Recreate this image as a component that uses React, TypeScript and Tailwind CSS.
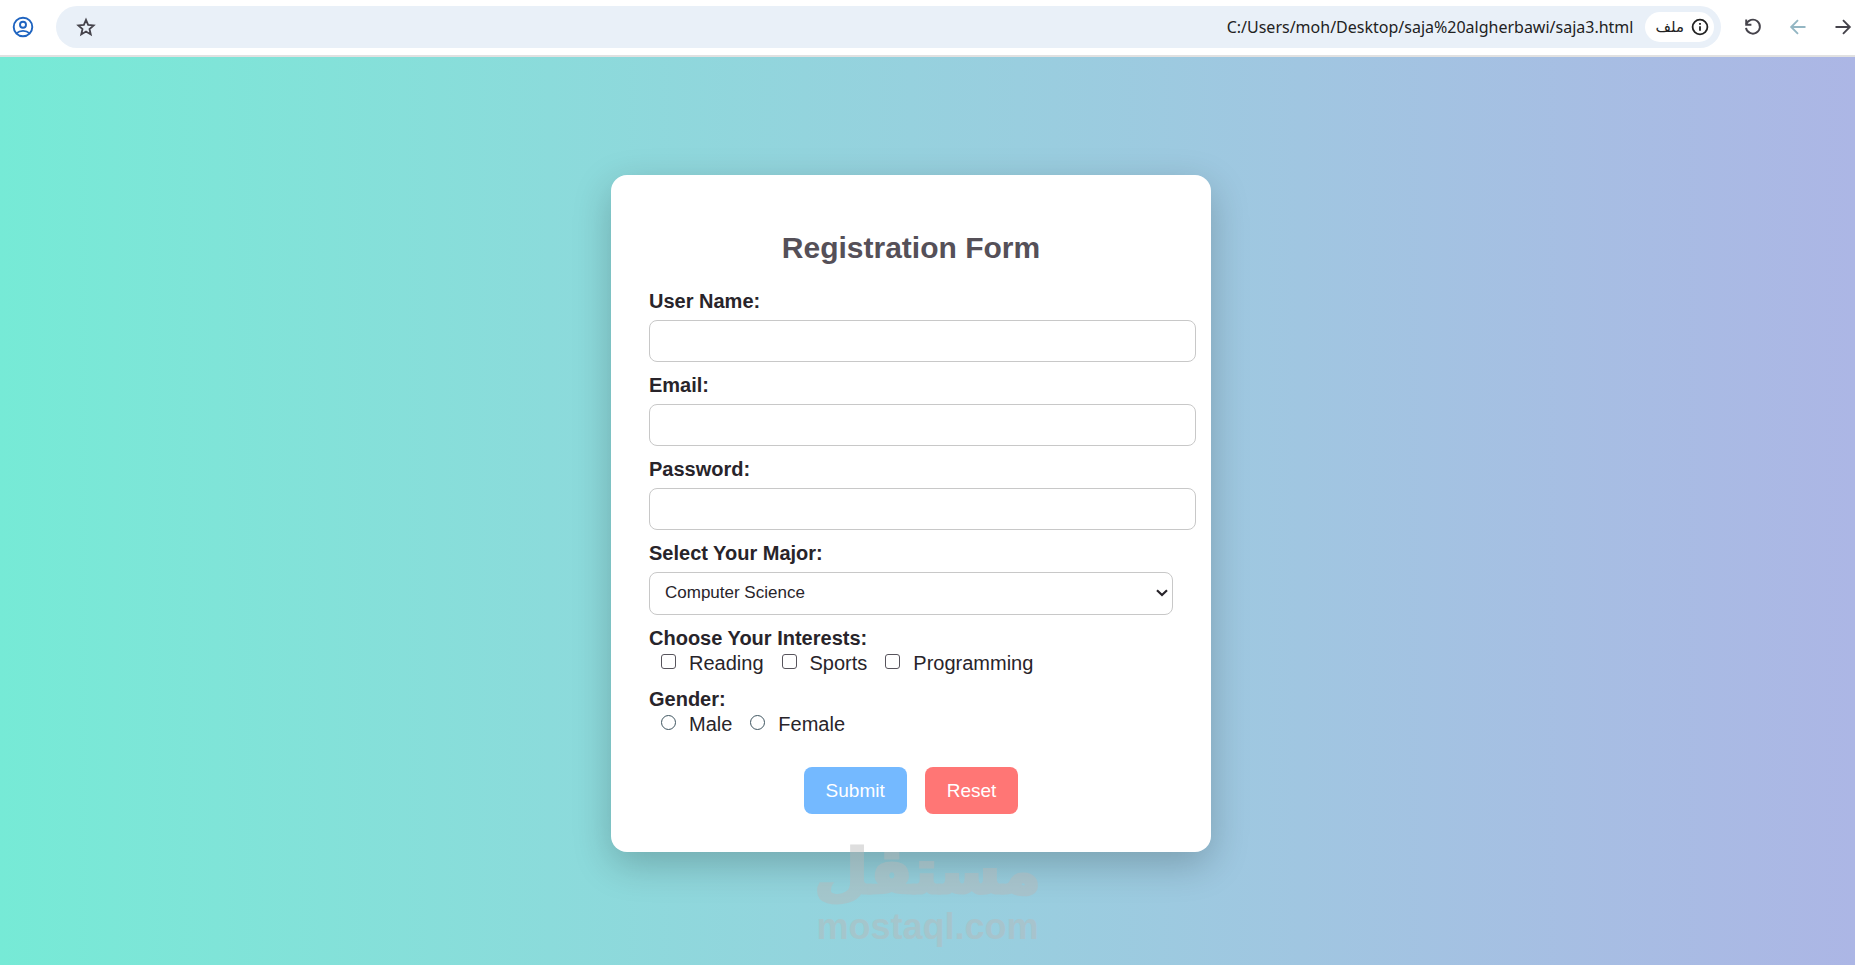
import type { ReactNode } from "react";

const INTERESTS = ["Reading", "Sports", "Programming"];
const GENDERS = ["Male", "Female"];
const MAJORS = ["Computer Science", "Information Technology", "Software Engineering"];

const FIELDS = [
  { id: "username", label: "User Name:", type: "text" },
  { id: "email", label: "Email:", type: "email" },
  { id: "password", label: "Password:", type: "password" },
];

function IconButton({ label, children }: { label: string; children: ReactNode }) {
  return (
    <button type="button" aria-label={label} className="flex size-6 shrink-0 items-center justify-center">
      {children}
    </button>
  );
}

function BrowserBar() {
  return (
    <header className="flex h-[57px] items-center border-b-2 border-[#e1e1e1] bg-white pb-px pl-[11px] text-[#45434b]">
      <IconButton label="Profile">
        <svg viewBox="0 0 24 24" className="size-6" fill="none" stroke="#1f64c0" strokeWidth="1.9">
          <circle cx="12" cy="12" r="9.3" />
          <circle cx="12" cy="9.8" r="3" />
          <path d="M5.4 18.4c1.7-1.6 4-2.5 6.6-2.5s4.9.9 6.6 2.5" />
        </svg>
      </IconButton>
      <div className="mr-5 ml-[21px] flex h-[42px] min-w-0 flex-1 items-center rounded-full bg-[#e9f0f8] pr-[7px] pl-[18px]">
        <IconButton label="Bookmark this page">
          <svg viewBox="0 0 24 24" className="size-6" fill="none" stroke="currentColor" strokeWidth="1.8">
            <path d="M12 4.8l2.15 5.1 5.5.5-4.15 3.65 1.25 5.4L12 16.6l-4.75 2.85 1.25-5.4-4.15-3.65 5.5-.5z" />
          </svg>
        </IconButton>
        <span className="ml-auto truncate font-['Noto_Sans',sans-serif] text-base leading-6 text-[#222]">
          C:/Users/moh/Desktop/saja%20algherbawi/saja3.html
        </span>
        <button
          type="button"
          className="ml-3 flex h-[30px] shrink-0 items-center gap-1.5 rounded-full bg-white pr-1 pl-[10px] text-[#222]"
        >
          <span lang="ar" className="font-['DejaVu_Sans',sans-serif] text-[15px] leading-5">
            ملف
          </span>
          <svg viewBox="0 0 20 20" className="size-5" fill="none" stroke="currentColor" strokeWidth="1.8">
            <circle cx="10" cy="10" r="7.4" />
            <path d="M10 9.2v4.6M10 5.9v1.9" />
          </svg>
        </button>
      </div>
      <nav className="flex items-center gap-[21px]" aria-label="Browser navigation">
        <IconButton label="Reload">
          <svg viewBox="0 0 24 24" className="size-6" fill="none" stroke="currentColor" strokeWidth="1.9">
            <path d="M5.3 9.3A7 7 0 1 1 5 12.8" />
            <path d="M5.2 4.6v5.1h5.2" />
          </svg>
        </IconButton>
        <IconButton label="Forward">
          <svg viewBox="0 0 24 24" className="size-6" fill="none" stroke="#93b6c3" strokeWidth="1.9">
            <path d="M19.5 12H5.5M12 5.2L5.2 12l6.8 6.8" />
          </svg>
        </IconButton>
        <IconButton label="Back">
          <svg viewBox="0 0 24 24" className="size-6" fill="none" stroke="currentColor" strokeWidth="1.9">
            <path d="M4.5 12h14M12 5.2l6.8 6.8-6.8 6.8" />
          </svg>
        </IconButton>
      </nav>
    </header>
  );
}

function ChoiceGroup({ title, type, name, options }: { title: string; type: "checkbox" | "radio"; name: string; options: string[] }) {
  const shape =
    type === "radio"
      ? "rounded-full border-[#3f5560] checked:border-4"
      : "rounded-[3px] border-[#57545c] checked:bg-[#57545c]";
  return (
    <fieldset className="mb-[11px]">
      <legend className="text-xl leading-6 font-bold">{title}</legend>
      <div className="flex flex-wrap gap-x-[18px] pl-3">
        {options.map((option) => (
          <label key={option} className="flex items-center gap-[13px] text-xl leading-[26px]">
            <input type={type} name={name} value={option} className={`mb-[3px] size-[15px] appearance-none border bg-white ${shape}`} />
            {option}
          </label>
        ))}
      </div>
    </fieldset>
  );
}

function RegistrationForm() {
  return (
    <form className="w-full max-w-[600px] rounded-2xl bg-white p-[38px] font-['Liberation_Sans',Arial,sans-serif] text-[#28242a] shadow-[0_12px_38px_rgba(0,0,0,0.22)]">
      <h1 className="mt-[17px] mb-[23px] text-center text-3xl leading-9 font-bold text-[#555058]">Registration Form</h1>
      {FIELDS.map(({ id, label, type }) => (
        <div key={id} className="-mr-[23px] mb-[11px]">
          <label htmlFor={id} className="mb-[7px] block text-xl leading-6 font-bold">
            {label}
          </label>
          <input id={id} type={type} className="block h-[42px] w-full rounded-lg border border-[#c8c8c8] px-4 text-[17px]" />
        </div>
      ))}
      <div className="mb-[11px]">
        <label htmlFor="major" className="mb-[7px] block text-xl leading-6 font-bold">
          Select Your Major:
        </label>
        <div className="grid items-center">
          <select
            id="major"
            className="col-start-1 row-start-1 h-[43px] w-full appearance-none rounded-lg border border-[#c8c8c8] bg-white px-[15px] text-[17px]"
          >
            {MAJORS.map((major) => (
              <option key={major}>{major}</option>
            ))}
          </select>
          <svg
            viewBox="0 0 12 8"
            className="pointer-events-none col-start-1 row-start-1 mr-[5px] h-2 w-3 justify-self-end"
            fill="none"
            stroke="currentColor"
            strokeWidth="2.2"
            aria-hidden="true"
          >
            <path d="M1 1.3l5 4.7 5-4.7" />
          </svg>
        </div>
      </div>
      <ChoiceGroup title="Choose Your Interests:" type="checkbox" name="interests" options={INTERESTS} />
      <ChoiceGroup title="Gender:" type="radio" name="gender" options={GENDERS} />
      <div className="flex justify-center gap-[18px] pt-[19px] text-[19px] leading-[23px] text-white">
        <button type="submit" className="rounded-lg bg-[#74b9ff] px-[22px] py-3">
          Submit
        </button>
        <button type="reset" className="rounded-lg bg-[#ff7675] px-[22px] py-3">
          Reset
        </button>
      </div>
    </form>
  );
}

function Watermark() {
  return (
    <div className="pointer-events-none absolute inset-x-0 bottom-[18px] flex flex-col items-center font-bold text-[#b8b8b8] opacity-45">
      <span lang="ar" className="font-['DejaVu_Sans',sans-serif] text-[62px] leading-[70px] [-webkit-text-stroke:3px_#b8b8b8]">
        مستقل
      </span>
      <span className="font-['Liberation_Sans',Arial,sans-serif] text-4xl leading-10">mostaql.com</span>
    </div>
  );
}

export default function App() {
  return (
    <div className="flex min-h-screen flex-col">
      <BrowserBar />
      <main className="relative flex flex-1 items-center justify-center bg-linear-to-r from-[#76ead6] to-[#acb6e5] pt-1 pr-[33px]">
        <RegistrationForm />
        <Watermark />
      </main>
    </div>
  );
}
